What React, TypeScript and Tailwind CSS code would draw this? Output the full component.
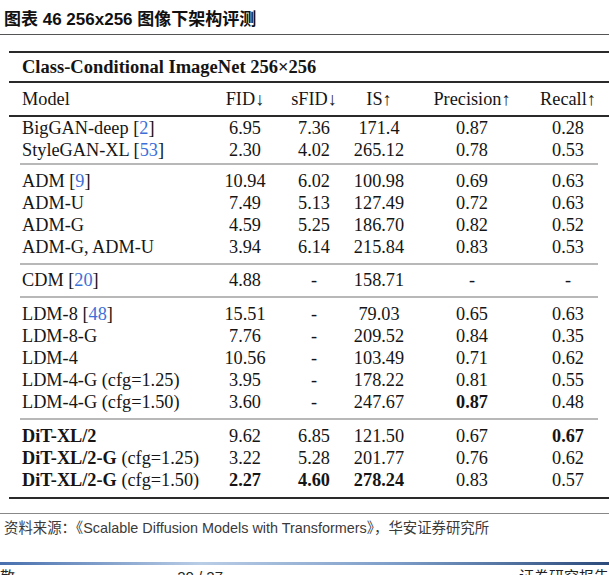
import React from "react";

type Row = {
  name: string;
  bold?: boolean;
  suffix?: string;
  cite?: string;
  vals: string[];
  strong?: number[];
};

const groups: { rows: Row[]; pad: string }[] = [
  {
    pad: "pb-[2px]",
    rows: [
      { name: "BigGAN-deep", cite: "2", vals: ["6.95", "7.36", "171.4", "0.87", "0.28"] },
      { name: "StyleGAN-XL", cite: "53", vals: ["2.30", "4.02", "265.12", "0.78", "0.53"] },
    ],
  },
  {
    pad: "py-[5px]",
    rows: [
      { name: "ADM", cite: "9", vals: ["10.94", "6.02", "100.98", "0.69", "0.63"] },
      { name: "ADM-U", vals: ["7.49", "5.13", "127.49", "0.72", "0.63"] },
      { name: "ADM-G", vals: ["4.59", "5.25", "186.70", "0.82", "0.52"] },
      { name: "ADM-G, ADM-U", vals: ["3.94", "6.14", "215.84", "0.83", "0.53"] },
    ],
  },
  {
    pad: "pt-[4px] pb-[5px]",
    rows: [{ name: "CDM", cite: "20", vals: ["4.88", "-", "158.71", "-", "-"] }],
  },
  {
    pad: "py-[5px]",
    rows: [
      { name: "LDM-8", cite: "48", vals: ["15.51", "-", "79.03", "0.65", "0.63"] },
      { name: "LDM-8-G", vals: ["7.76", "-", "209.52", "0.84", "0.35"] },
      { name: "LDM-4", vals: ["10.56", "-", "103.49", "0.71", "0.62"] },
      { name: "LDM-4-G (cfg=1.25)", vals: ["3.95", "-", "178.22", "0.81", "0.55"] },
      { name: "LDM-4-G (cfg=1.50)", vals: ["3.60", "-", "247.67", "0.87", "0.48"], strong: [3] },
    ],
  },
  {
    pad: "pt-[5px] pb-[6px]",
    rows: [
      { name: "DiT-XL/2", bold: true, vals: ["9.62", "6.85", "121.50", "0.67", "0.67"], strong: [4] },
      { name: "DiT-XL/2-G", bold: true, suffix: " (cfg=1.25)", vals: ["3.22", "5.28", "201.77", "0.76", "0.62"] },
      { name: "DiT-XL/2-G", bold: true, suffix: " (cfg=1.50)", vals: ["2.27", "4.60", "278.24", "0.83", "0.57"], strong: [0, 1, 2] },
    ],
  },
];

const cols = "grid grid-cols-[189px_68px_70px_60px_126px_66px] items-center";

function TableRow({ r }: { r: Row }) {
  return (
    <div className={`${cols} h-[22px]`}>
      <div className="whitespace-nowrap">
        <span className={r.bold ? "font-bold" : ""}>{r.name}</span>
        {r.suffix}
        {r.cite && (
          <>
            {" "}[<span className="text-[#3d6fd8]">{r.cite}</span>]
          </>
        )}
      </div>
      {r.vals.map((v, i) => (
        <div key={i} className={`text-center whitespace-nowrap ${r.strong?.includes(i) ? "font-bold" : ""}`}>
          {v}
        </div>
      ))}
    </div>
  );
}

export default function App() {
  return (
    <div className="relative w-[609px] h-[575px] overflow-hidden bg-white">
      {/* figure caption */}
      <div className="h-[34px] pt-[10px] pl-[4px] text-[17px] leading-[20px] font-bold text-[#111] font-['Liberation_Sans','Noto_Sans_CJK_SC',sans-serif] whitespace-nowrap">
        图表 46 256x256 图像下架构评测
      </div>
      <div className="h-px bg-[#555]" />

      {/* table */}
      <div className="ml-[9px] mt-[16px] text-[18.3px] leading-[22px] text-[#151515] font-['Liberation_Serif',serif]">
        <div className="h-[2px] bg-[#2a2a2a]" />
        <div className="h-[28px] flex items-center pl-[13px] font-bold text-[18.5px]">
          Class-Conditional ImageNet 256×256
        </div>
        <div className="h-[2px] bg-[#2a2a2a]" />
        <div className={`${cols} h-[32px] pl-[13px]`}>
          <div>Model</div>
          <div className="text-center">FID↓</div>
          <div className="text-center">sFID↓</div>
          <div className="text-center">IS↑</div>
          <div className="text-center">Precision↑</div>
          <div className="text-center">Recall↑</div>
        </div>
        <div className="h-[2px] bg-[#2a2a2a]" />
        {groups.map((g, gi) => (
          <div key={gi}>
            <div className={`${g.pad} pl-[13px]`}>
              {g.rows.map((r, ri) => (
                <TableRow key={ri} r={r} />
              ))}
            </div>
            {gi < groups.length - 1 ? (
              <div className="ml-[11px] mr-[11px] h-[2px] bg-[#b8b8b8]" />
            ) : (
              <div className="h-[2px] bg-[#2a2a2a]" />
            )}
          </div>
        ))}
      </div>

      <div className="mt-[14px] h-px bg-[#888]" />
      <div className="pt-[4px] pl-[4px] text-[14.4px] leading-[20px] text-[#3a3a3a] font-['Liberation_Sans','Noto_Sans_CJK_SC',sans-serif] whitespace-nowrap">
        资料来源：《Scalable Diffusion Models with Transformers》，华安证券研究所
      </div>

      {/* page footer */}
      <div className="mt-[24px] h-[3px] bg-[linear-gradient(to_right,#4870ae,#b9cde6_33%,#7d9dc8_65%,#2c4b7c)]" />
      <div className="flex items-start pt-[3px] text-[15px] leading-[18px] text-[#222] font-['Liberation_Sans','Noto_Sans_CJK_SC',sans-serif] whitespace-nowrap">
        <div className="w-[183px]">敬</div>
        <div className="w-[353px]">20 / 27</div>
        <div>证券研究报告</div>
      </div>
    </div>
  );
}
